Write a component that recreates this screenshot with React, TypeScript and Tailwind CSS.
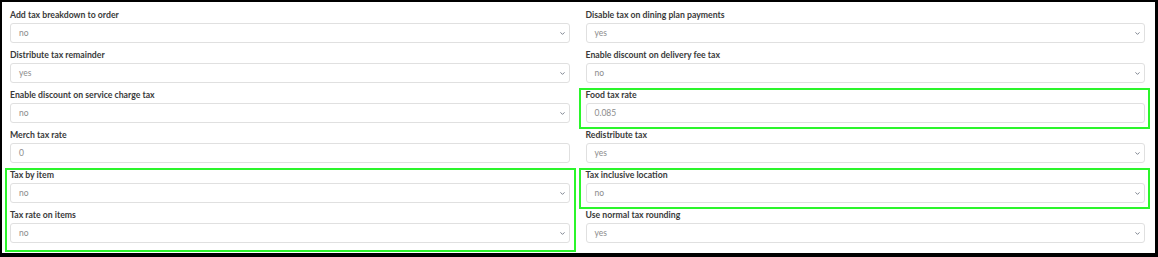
import { ChevronDown } from 'lucide-react'

type Field = {
  label: string
  value: string
  kind: 'select' | 'input'
}

const left: Field[] = [
  { label: 'Add tax breakdown to order', value: 'no', kind: 'select' },
  { label: 'Distribute tax remainder', value: 'yes', kind: 'select' },
  { label: 'Enable discount on service charge tax', value: 'no', kind: 'select' },
  { label: 'Merch tax rate', value: '0', kind: 'input' },
  { label: 'Tax by item', value: 'no', kind: 'select' },
  { label: 'Tax rate on items', value: 'no', kind: 'select' },
]

const right: Field[] = [
  { label: 'Disable tax on dining plan payments', value: 'yes', kind: 'select' },
  { label: 'Enable discount on delivery fee tax', value: 'no', kind: 'select' },
  { label: 'Food tax rate', value: '0.085', kind: 'input' },
  { label: 'Redistribute tax', value: 'yes', kind: 'select' },
  { label: 'Tax inclusive location', value: 'no', kind: 'select' },
  { label: 'Use normal tax rounding', value: 'yes', kind: 'select' },
]

function FieldRow({ field }: { field: Field }) {
  return (
    <div className="h-[40px] flex flex-col">
      <label className="h-[14px] leading-[14px] text-[8.7px] font-bold text-[#3a3a3a]">{field.label}</label>
      <div className="mt-[1px] h-[20px] flex items-center justify-between border border-[#e0e0e0] rounded-[3px] bg-white pl-[8px] pr-[3px]">
        <span className="text-[8.5px] text-[#8c8c8c]">{field.value}</span>
        {field.kind === 'select' && <ChevronDown size={7} strokeWidth={3} className="text-[#6b7280]" />}
      </div>
    </div>
  )
}

function App() {
  return (
    <div className="w-[1158px] h-[257px] bg-black pt-[2px] pl-[2px] pr-[3px] pb-[4px]" style={{ fontFamily: 'Lato, "Open Sans", sans-serif' }}>
      <div className="relative h-full bg-white pt-[6px] pl-[8px] pr-[10px]">
        <div className="grid grid-cols-2 gap-x-[16px]">
          <div className="flex flex-col">
            {left.map((f) => (
              <FieldRow key={f.label} field={f} />
            ))}
          </div>
          <div className="flex flex-col">
            {right.map((f) => (
              <FieldRow key={f.label} field={f} />
            ))}
          </div>
        </div>
        <div className="absolute left-[577px] top-[86px] w-[571px] h-[41px] border-2 border-[#2bf52b]" />
        <div className="absolute left-[3px] top-[166px] w-[571px] h-[84px] border-2 border-[#2bf52b]" />
        <div className="absolute left-[577px] top-[166px] w-[571px] h-[41px] border-2 border-[#2bf52b]" />
      </div>
    </div>
  )
}

export default App
